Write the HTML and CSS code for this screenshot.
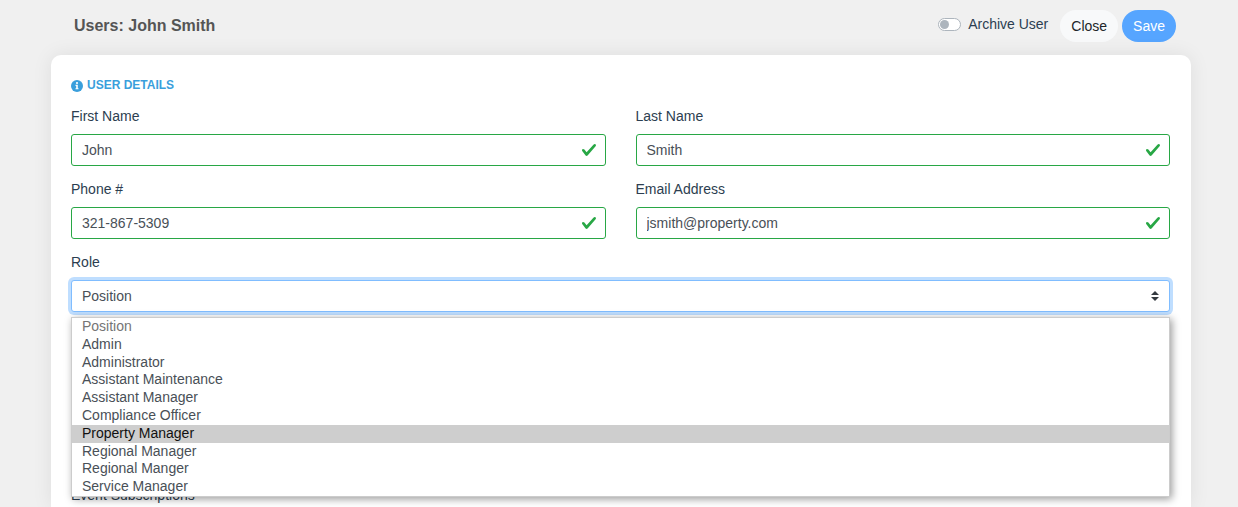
FILE: index.html
```html
<!DOCTYPE html>
<html lang="en">
<head>
    <meta charset="UTF-8">
    <meta name="viewport" content="width=device-width, initial-scale=1.0">
    <title>Users: John Smith</title>
    <link rel="stylesheet" href="styles.css">
</head>
<body>
    <form class="page">
        <header class="page-header">
            <h1 class="page-title">Users: John Smith</h1>
            <div class="actions">
                <label class="switch">
                    <input type="checkbox" class="switch-input">
                    Archive User
                </label>
                <button type="button" class="btn btn-light">Close</button>
                <button type="submit" class="btn btn-primary">Save</button>
            </div>
        </header>

        <main class="card">
            <h2 class="section-title">
                <svg class="info-icon" viewBox="0 0 12 12" aria-hidden="true">
                    <circle cx="6" cy="6" r="6" fill="currentColor"/>
                    <circle cx="6" cy="3" r="1.1" fill="#fff"/>
                    <path d="M4.5 4.8H6.8V8.2H7.5V9.3H4.5V8.2H5.2V5.9H4.5Z" fill="#fff"/>
                </svg>
                USER DETAILS
            </h2>

            <div class="form-grid">
                <div class="form-group">
                    <label for="first-name">First Name</label>
                    <div class="field">
                        <input type="text" id="first-name" class="form-control" value="John">
                        <svg class="check" viewBox="0 0 8 8" aria-hidden="true"><path d="M2.3 6.73L.6 4.53c-.4-1.04.46-1.4 1.1-.8l1.1 1.4 3.4-3.8c.6-.63 1.6-.27 1.2.7l-4 4.6c-.43.5-.8.4-1.1.1z"/></svg>
                    </div>
                </div>
                <div class="form-group">
                    <label for="last-name">Last Name</label>
                    <div class="field">
                        <input type="text" id="last-name" class="form-control" value="Smith">
                        <svg class="check" viewBox="0 0 8 8" aria-hidden="true"><path d="M2.3 6.73L.6 4.53c-.4-1.04.46-1.4 1.1-.8l1.1 1.4 3.4-3.8c.6-.63 1.6-.27 1.2.7l-4 4.6c-.43.5-.8.4-1.1.1z"/></svg>
                    </div>
                </div>
                <div class="form-group">
                    <label for="phone">Phone #</label>
                    <div class="field">
                        <input type="tel" id="phone" class="form-control" value="321-867-5309">
                        <svg class="check" viewBox="0 0 8 8" aria-hidden="true"><path d="M2.3 6.73L.6 4.53c-.4-1.04.46-1.4 1.1-.8l1.1 1.4 3.4-3.8c.6-.63 1.6-.27 1.2.7l-4 4.6c-.43.5-.8.4-1.1.1z"/></svg>
                    </div>
                </div>
                <div class="form-group">
                    <label for="email">Email Address</label>
                    <div class="field">
                        <input type="email" id="email" class="form-control" value="jsmith@property.com">
                        <svg class="check" viewBox="0 0 8 8" aria-hidden="true"><path d="M2.3 6.73L.6 4.53c-.4-1.04.46-1.4 1.1-.8l1.1 1.4 3.4-3.8c.6-.63 1.6-.27 1.2.7l-4 4.6c-.43.5-.8.4-1.1.1z"/></svg>
                    </div>
                </div>
                <div class="form-group form-group-wide">
                    <label for="role">Role</label>
                    <div class="field">
                        <select id="role" class="form-control role-select">
                            <option>Position</option>
                        </select>
                        <svg class="caret" viewBox="0 0 4 5" aria-hidden="true"><path d="M2 0L0 2h4zm0 5L0 3h4z"/></svg>
                        <ul class="menu" role="listbox" aria-label="Role">
                            <li class="menu-item disabled" role="option" aria-disabled="true">Position</li>
                            <li class="menu-item" role="option">Admin</li>
                            <li class="menu-item" role="option">Administrator</li>
                            <li class="menu-item" role="option">Assistant Maintenance</li>
                            <li class="menu-item" role="option">Assistant Manager</li>
                            <li class="menu-item" role="option">Compliance Officer</li>
                            <li class="menu-item highlighted" role="option" aria-selected="true">Property Manager</li>
                            <li class="menu-item" role="option">Regional Manager</li>
                            <li class="menu-item" role="option">Regional Manger</li>
                            <li class="menu-item" role="option">Service Manager</li>
                        </ul>
                    </div>
                </div>
            </div>

            <p class="subscriptions">Event Subscriptions</p>
        </main>
    </form>
</body>
</html>
```
FILE: styles.css
```css
* {
    box-sizing: border-box;
}
body {
    margin: 0;
    background-color: #f0f0f0;
    color: #2c3e50;
    font-family: "Liberation Sans", Arial, sans-serif;
    font-size: 14px;
    line-height: 21px;
}
.page {
    display: flex;
    flex-direction: column;
    min-height: 100vh;
    padding: 10px 47px 0 51px;
}
.page-header {
    display: flex;
    align-items: center;
    justify-content: space-between;
    padding: 0 15px 0 23px;
    margin-bottom: 13px;
}
.page-title {
    margin: 0;
    padding-bottom: 2px;
    color: #555;
    font-size: 16px;
}
.actions {
    display: flex;
    align-items: center;
    gap: 4px;
}
.switch {
    display: flex;
    align-items: center;
    gap: 7px;
    margin-right: 8px;
    padding-bottom: 3px;
}
.switch-input {
    appearance: none;
    display: flex;
    align-items: center;
    width: 23px;
    height: 13px;
    margin: 0;
    padding: 0 1px;
    border: 1px solid #adb5bd;
    border-radius: 7px;
    background-color: #fff;
}
.switch-input::before {
    content: "";
    width: 9px;
    height: 9px;
    border-radius: 50%;
    background-color: #adb5bd;
}
.switch-input:checked::before {
    margin-left: auto;
}
.btn {
    height: 32px;
    padding: 0 11px;
    border: 0;
    border-radius: 16px;
    font: inherit;
    cursor: pointer;
}
.btn-light {
    background-color: #f8f9fa;
    color: #212529;
}
.btn-primary {
    background-color: #56a5ff;
    color: #fff;
}
.card {
    flex: 1;
    padding: 20px 21px 0 20px;
    border-radius: 10px 10px 0 0;
    background-color: #fff;
    box-shadow: 0 0 20px rgba(0, 0, 0, 0.08);
}
.section-title {
    display: flex;
    align-items: center;
    gap: 4px;
    margin: 0 0 10px;
    color: #3a9fdc;
    font-size: 12px;
    line-height: 21px;
}
.info-icon {
    width: 12px;
    height: 12px;
}
.form-grid {
    display: grid;
    grid-template-columns: 1fr 1fr;
    gap: 13px 30px;
}
.form-group-wide {
    grid-column: 1 / -1;
}
.form-group label {
    display: block;
    margin-bottom: 7px;
}
.field {
    position: relative;
}
.form-control {
    display: block;
    width: 100%;
    height: 32px;
    padding: 0 32px 0 10px;
    border: 1px solid #28a745;
    border-radius: 3px;
    outline: 0;
    background-color: #fff;
    color: #495057;
    font: inherit;
}
.check {
    position: absolute;
    top: 8px;
    right: 9px;
    width: 16px;
    height: 16px;
    fill: #28a745;
}
.role-select {
    appearance: none;
    border-color: #80bdff;
    box-shadow: 0 0 0 3px rgba(0, 123, 255, 0.25);
}
.caret {
    position: absolute;
    top: 11px;
    right: 11px;
    width: 8px;
    height: 10px;
    fill: #343a40;
    pointer-events: none;
}
.menu {
    position: absolute;
    top: 37px;
    left: 0;
    right: 0;
    display: grid;
    grid-auto-rows: 1fr;
    height: 180px;
    margin: 0;
    padding: 0;
    border: 1px solid #ccc;
    background-color: #fff;
    box-shadow: 2px 2px 8px rgba(0, 0, 0, 0.4);
    list-style: none;
}
.menu-item {
    padding-left: 10px;
    color: #495057;
    line-height: 17px;
}
.menu-item.disabled {
    color: #757575;
}
.menu-item.highlighted {
    background-color: #cecece;
    color: #111;
}
.subscriptions {
    margin: 173px 0 0;
}
```
